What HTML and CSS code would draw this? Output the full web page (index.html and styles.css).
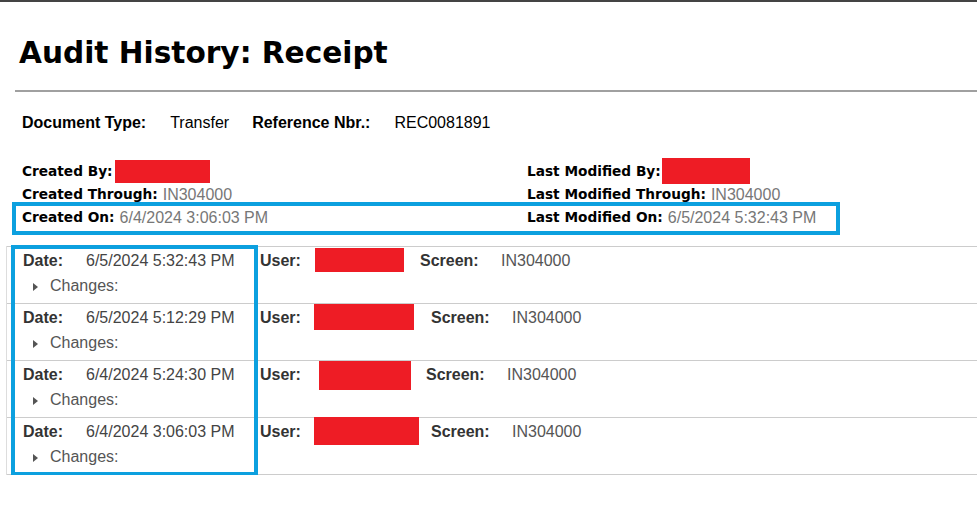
FILE: index.html
```html
<!DOCTYPE html>
<html lang="en">
<head>
    <meta charset="UTF-8">
    <meta name="viewport" content="width=device-width, initial-scale=1.0">
    <title>Audit History: Receipt</title>
    <link rel="stylesheet" href="styles.css">
</head>
<body>
    <div class="topbar"></div>

    <div class="header">
        <h1>Audit History: Receipt</h1>
        <div class="rule"></div>

        <div class="doc-line">
            <span class="doc-label">Document Type:</span>
            <span class="doc-value">Transfer</span>
            <span class="doc-label">Reference Nbr.:</span>
            <span class="doc-value">REC0081891</span>
        </div>

        <div class="info">
            <div class="info-col">
                <div class="info-row"><span class="info-label">Created By:</span><span class="redact redact-created"></span></div>
                <div class="info-row"><span class="info-label">Created Through:</span><span class="info-value">IN304000</span></div>
                <div class="info-row"><span class="info-label">Created On:</span><span class="info-value">6/4/2024 3:06:03 PM</span></div>
            </div>
            <div class="info-col">
                <div class="info-row"><span class="info-label">Last Modified By:</span><span class="redact redact-modified"></span></div>
                <div class="info-row"><span class="info-label">Last Modified Through:</span><span class="info-value">IN304000</span></div>
                <div class="info-row"><span class="info-label">Last Modified On:</span><span class="info-value">6/5/2024 5:32:43 PM</span></div>
            </div>
        </div>
    </div>

    <div class="audit-list">
        <div class="audit-row">
            <div class="audit-main">
                <span class="audit-date"><b class="lbl lbl-date">Date:</b>6/5/2024 5:32:43 PM</span>
                <b class="lbl lbl-user">User:</b>
                <span class="redact user-1"></span>
                <b class="lbl lbl-screen">Screen:</b>
                <span class="audit-value">IN304000</span>
            </div>
            <div class="changes"><span class="caret"></span>Changes:</div>
        </div>
        <div class="audit-row">
            <div class="audit-main">
                <span class="audit-date"><b class="lbl lbl-date">Date:</b>6/5/2024 5:12:29 PM</span>
                <b class="lbl lbl-user">User:</b>
                <span class="redact user-2"></span>
                <b class="lbl lbl-screen">Screen:</b>
                <span class="audit-value">IN304000</span>
            </div>
            <div class="changes"><span class="caret"></span>Changes:</div>
        </div>
        <div class="audit-row">
            <div class="audit-main">
                <span class="audit-date"><b class="lbl lbl-date">Date:</b>6/4/2024 5:24:30 PM</span>
                <b class="lbl lbl-user">User:</b>
                <span class="redact user-3"></span>
                <b class="lbl lbl-screen">Screen:</b>
                <span class="audit-value">IN304000</span>
            </div>
            <div class="changes"><span class="caret"></span>Changes:</div>
        </div>
        <div class="audit-row">
            <div class="audit-main">
                <span class="audit-date"><b class="lbl lbl-date">Date:</b>6/4/2024 3:06:03 PM</span>
                <b class="lbl lbl-user">User:</b>
                <span class="redact user-4"></span>
                <b class="lbl lbl-screen">Screen:</b>
                <span class="audit-value">IN304000</span>
            </div>
            <div class="changes"><span class="caret"></span>Changes:</div>
        </div>
    </div>

    <!-- annotation boxes drawn over the page -->
    <div class="mark mark-created"></div>
    <div class="mark mark-dates"></div>
</body>
</html>
```

FILE: styles.css
```css
body {
    margin: 0;
    background: #fff;
    font-family: 'Liberation Sans', Arial, sans-serif;
    font-size: 16px;
    color: #333;
    position: relative;
    overflow: hidden;
}

.topbar {
    height: 2px;
    background: #444;
}

.header {
    padding-left: 15px;
}

h1 {
    margin: 33px 0 0 4px;
    font-family: 'DejaVu Sans', Verdana, sans-serif;
    font-size: 29.6px;
    line-height: 37px;
    font-weight: bold;
    color: #000;
}

.rule {
    margin-top: 18px;
    height: 2px;
    background: #a0a0a0;
}

.doc-line {
    margin-top: 21px;
    padding-left: 7px;
    line-height: 20px;
    color: #000;
    display: flex;
}

.doc-label {
    font-weight: bold;
    margin-right: 24px;
}

.doc-value {
    margin-right: 23px;
}

.info {
    margin-top: 27px;
    padding-left: 7px;
    display: grid;
    grid-template-columns: 505px 1fr;
}

.info-row {
    display: flex;
    align-items: flex-start;
    height: 23px;
    line-height: 23px;
}

.info-label {
    font-family: 'DejaVu Sans', Verdana, sans-serif;
    font-size: 13.7px;
    font-weight: bold;
    color: #000;
    margin-right: 5px;
}

.info-value {
    color: #777;
}

.redact {
    display: block;
    background: #ee1c25;
}

.redact-created {
    width: 95px;
    height: 23px;
    margin: 0 0 0 -3px;
}

.redact-modified {
    width: 88px;
    height: 26px;
    margin: -2px 0 0 -4px;
}

.audit-list {
    margin: 17px 0 0 6px;
    border-left: 1px solid #ddd;
}

.audit-row {
    border-top: 1px solid #ccc;
    padding: 4px 0 6px 16px;
    height: 46px;
}

.audit-row:last-child {
    border-bottom: 1px solid #ccc;
}

.audit-main {
    display: flex;
    align-items: flex-start;
    height: 20px;
    line-height: 20px;
}

.lbl {
    color: #333;
}

.audit-date {
    width: 237px;
    color: #444;
}

.lbl-date {
    display: inline-block;
    width: 63px;
}

.lbl-user {
    width: 54px;
}

.lbl-screen {
    width: 81px;
}

.audit-value {
    color: #555;
}

.user-1 { width: 89px; height: 24px; margin: -3px 16px 0 1px; }
.user-2 { width: 100px; height: 26px; margin: -4px 17px 0 0; }
.user-3 { width: 92px; height: 29px; margin: -4px 15px 0 5px; }
.user-4 { width: 105px; height: 28px; margin: -5px 12px 0 0; }

.changes {
    margin-top: 5px;
    line-height: 20px;
    color: #555;
    display: flex;
    align-items: flex-end;
}

.caret {
    width: 0;
    height: 0;
    border-top: 4px solid transparent;
    border-bottom: 4px solid transparent;
    border-left: 5px solid #555;
    margin: 0 12px 5px 10px;
}

.mark {
    position: absolute;
    border: 4px solid #0ca0df;
}

.mark-created {
    left: 12px;
    top: 202px;
    width: 820px;
    height: 25px;
}

.mark-dates {
    left: 11px;
    top: 245px;
    width: 239px;
    height: 223px;
}
```
